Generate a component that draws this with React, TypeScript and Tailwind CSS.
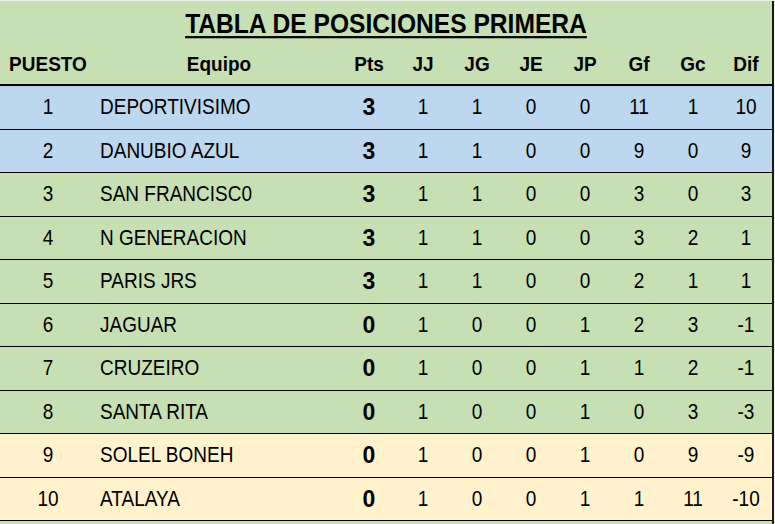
const teams = [
  { pos: 1, name: 'DEPORTIVISIMO', pts: 3, jj: 1, jg: 1, je: 0, jp: 0, gf: 11, gc: 1, dif: 10, tone: 'blue' },
  { pos: 2, name: 'DANUBIO AZUL', pts: 3, jj: 1, jg: 1, je: 0, jp: 0, gf: 9, gc: 0, dif: 9, tone: 'blue' },
  { pos: 3, name: 'SAN FRANCISC0', pts: 3, jj: 1, jg: 1, je: 0, jp: 0, gf: 3, gc: 0, dif: 3, tone: 'green' },
  { pos: 4, name: 'N GENERACION', pts: 3, jj: 1, jg: 1, je: 0, jp: 0, gf: 3, gc: 2, dif: 1, tone: 'green' },
  { pos: 5, name: 'PARIS JRS', pts: 3, jj: 1, jg: 1, je: 0, jp: 0, gf: 2, gc: 1, dif: 1, tone: 'green' },
  { pos: 6, name: 'JAGUAR', pts: 0, jj: 1, jg: 0, je: 0, jp: 1, gf: 2, gc: 3, dif: -1, tone: 'green' },
  { pos: 7, name: 'CRUZEIRO', pts: 0, jj: 1, jg: 0, je: 0, jp: 1, gf: 1, gc: 2, dif: -1, tone: 'green' },
  { pos: 8, name: 'SANTA RITA', pts: 0, jj: 1, jg: 0, je: 0, jp: 1, gf: 0, gc: 3, dif: -3, tone: 'green' },
  { pos: 9, name: 'SOLEL BONEH', pts: 0, jj: 1, jg: 0, je: 0, jp: 1, gf: 0, gc: 9, dif: -9, tone: 'yellow' },
  { pos: 10, name: 'ATALAYA', pts: 0, jj: 1, jg: 0, je: 0, jp: 1, gf: 1, gc: 11, dif: -10, tone: 'yellow' }
];

const toneBg: Record<string, string> = {
  blue: 'bg-[#bdd7ee]',
  green: 'bg-[#c6e0b4]',
  yellow: 'bg-[#fff2cc]'
};

const cols = 'grid grid-cols-[96px_246px_54px_54px_54px_54px_54px_54px_54px_52px]';
const heads = ['JJ', 'JG', 'JE', 'JP', 'Gf', 'Gc', 'Dif'];
// the sheet was squeezed sideways, so letters look taller than Arial
const cell = 'text-center scale-y-[1.15]';

export default function App() {
  return (
    <div className="w-[775px] h-[524px] overflow-hidden bg-[#eef2ec] font-['Liberation_Sans',Arial,sans-serif] text-black">
      <div className="w-[774px] h-full border-r-2 border-[#1a1a1a] bg-[#c6e0b4] mt-px">
        {/* title */}
        <div className="h-[44px] flex items-center justify-center pt-[2px]">
          <h1 className="text-[24.6px] font-bold underline underline-offset-[3px] decoration-2 leading-none scale-y-[1.1]">
            TABLA DE POSICIONES PRIMERA
          </h1>
        </div>

        {/* header */}
        <div className={`${cols} h-[41px] items-center border-b-2 border-black text-[19px] font-bold`}>
          <div className="text-center scale-y-[1.1]">PUESTO</div>
          <div className="text-center scale-y-[1.1]">Equipo</div>
          <div className="text-center scale-y-[1.1]">Pts</div>
          {heads.map((h) => (
            <div key={h} className="text-center scale-y-[1.1]">
              {h}
            </div>
          ))}
        </div>

        {/* rows */}
        {teams.map((t) => (
          <div
            key={t.pos}
            className={`${cols} h-[43.5px] items-center border-b border-black text-[19px] ${toneBg[t.tone]}`}
          >
            <div className={cell}>{t.pos}</div>
            <div className="pl-1 scale-y-[1.15]">{t.name}</div>
            <div className="text-center text-[23px] font-bold scale-y-[1.05]">{t.pts}</div>
            <div className={cell}>{t.jj}</div>
            <div className={cell}>{t.jg}</div>
            <div className={cell}>{t.je}</div>
            <div className={cell}>{t.jp}</div>
            <div className={cell}>{t.gf}</div>
            <div className={cell}>{t.gc}</div>
            <div className={cell}>{t.dif}</div>
          </div>
        ))}
      </div>
    </div>
  );
}
